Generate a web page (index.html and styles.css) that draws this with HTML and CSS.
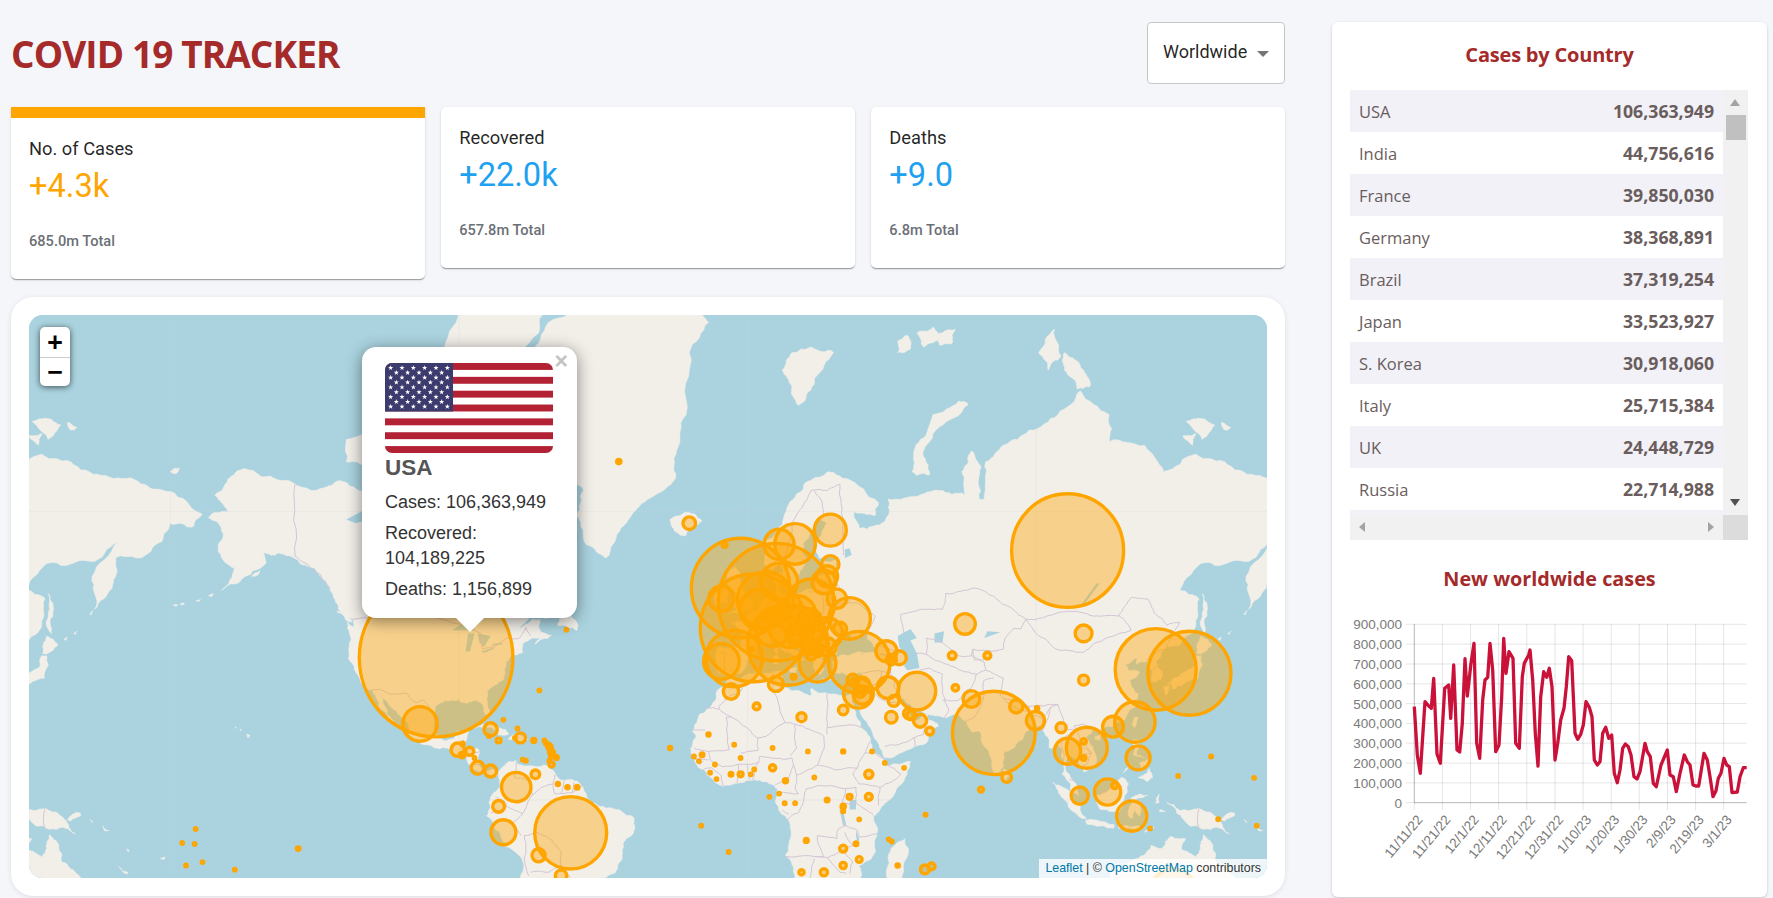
FILE: index.html
```html
<!DOCTYPE html>
<html lang="en">
<head>
<meta charset="utf-8">
<title>COVID 19 Tracker</title>
<link rel="stylesheet" href="styles.css">
</head>
<body>
<div class="app">
  <main class="left">
    <header class="header">
      <h1 class="brand">COVID 19 TRACKER</h1>
      <div class="select"><span>Worldwide</span><i class="caret"></i></div>
    </header>
    <section class="stats">
      <article class="stat stat-active">
        <div class="stat-bar"></div>
        <div class="stat-body">
          <div class="stat-label">No. of Cases</div>
          <div class="stat-value orange">+4.3k</div>
          <div class="stat-total">685.0m Total</div>
        </div>
      </article>
      <article class="stat">
        <div class="stat-body">
          <div class="stat-label">Recovered</div>
          <div class="stat-value blue">+22.0k</div>
          <div class="stat-total">657.8m Total</div>
        </div>
      </article>
      <article class="stat">
        <div class="stat-body">
          <div class="stat-label">Deaths</div>
          <div class="stat-value blue">+9.0</div>
          <div class="stat-total">6.8m Total</div>
        </div>
      </article>
    </section>
    <section class="map-card">
      <div class="map">
        <svg id="world" class="world" viewBox="29 315 1238 563" preserveAspectRatio="none" aria-hidden="true"></svg>
        <div class="zoom">
          <span class="zoom-btn">+</span>
          <span class="zoom-btn">&#8722;</span>
        </div>
        <div class="popup">
          <span class="popup-close">&#215;</span>
          <svg id="flag" class="flag" viewBox="0 0 168 90" aria-hidden="true"></svg>
          <div class="popup-name">USA</div>
          <div class="popup-line">Cases: 106,363,949</div>
          <div class="popup-line">Recovered: 104,189,225</div>
          <div class="popup-line">Deaths: 1,156,899</div>
          <i class="popup-tip"></i>
        </div>
        <div class="attrib"><a>Leaflet</a> | © <a>OpenStreetMap</a> contributors</div>
      </div>
    </section>
  </main>
  <aside class="panel">
    <h3 class="panel-title">Cases by Country</h3>
    <div class="table-box">
      <div class="rows">
        <div class="row"><span>USA</span><b>106,363,949</b></div>
        <div class="row"><span>India</span><b>44,756,616</b></div>
        <div class="row"><span>France</span><b>39,850,030</b></div>
        <div class="row"><span>Germany</span><b>38,368,891</b></div>
        <div class="row"><span>Brazil</span><b>37,319,254</b></div>
        <div class="row"><span>Japan</span><b>33,523,927</b></div>
        <div class="row"><span>S. Korea</span><b>30,918,060</b></div>
        <div class="row"><span>Italy</span><b>25,715,384</b></div>
        <div class="row"><span>UK</span><b>24,448,729</b></div>
        <div class="row"><span>Russia</span><b>22,714,988</b></div>
        <div class="row"></div>
      </div>
      <div class="vbar"><i class="arrow up"></i><i class="thumb"></i><i class="arrow down"></i></div>
      <div class="hbar"><i class="arrow left"></i><i class="arrow right"></i></div>
      <div class="corner"></div>
    </div>
    <h3 class="panel-title second">New worldwide cases</h3>
    <svg id="chart" class="chart" viewBox="1332 600 435 296" aria-hidden="true"></svg>
  </aside>
</div>
<script src="script.js"></script>
</body>
</html>
```
FILE: styles.css
```css
* { box-sizing: border-box; }
html, body { margin: 0; height: 100%; }
body { background: #f5f6fa; font-family: "Roboto", "Liberation Sans", sans-serif; overflow: hidden; }
.app { display: grid; grid-template-columns: 1274px 435px; column-gap: 47px; padding: 22px 6px 0 11px; }
.left { display: flex; flex-direction: column; }
.header { display: flex; justify-content: space-between; align-items: center; height: 62px; margin-bottom: 23px; }
.brand { margin: 0; font-family: "Open Sans", "Liberation Sans", sans-serif; font-weight: 700; font-size: 37px; letter-spacing: -.9px; color: #a52a2a; }
.select { width: 138px; height: 62px; background: #fff; border: 1px solid #c6c6c6; border-radius: 4px; padding: 0 15px 4px 15px; display: flex; align-items: center; justify-content: space-between; font-size: 18px; color: rgba(0,0,0,.87); }
.caret { width: 0; height: 0; border-left: 6px solid transparent; border-right: 6px solid transparent; border-top: 6px solid #757575; margin-top: 6px; }
.stats { display: flex; align-items: flex-start; gap: 16.5px; margin-bottom: 18px; }
.stat { flex: 1; background: #fff; border-radius: 5px; box-shadow: 0 2px 1px -1px rgba(0,0,0,.2), 0 1px 1px 0 rgba(0,0,0,.14), 0 1px 3px 0 rgba(0,0,0,.12); overflow: hidden; }
.stat-active { border-radius: 0 0 5px 5px; }
.stat-bar { height: 11px; background: #ffa500; }
.stat-body { height: 161px; padding: 19px 18px 0; display: flex; flex-direction: column; }
.stat-label { font-size: 18.3px; line-height: 24px; color: rgba(0,0,0,.87); }
.stat-value { font-size: 32.6px; line-height: 40px; margin-top: 5px; }
.orange { color: #ffa500; }
.blue { color: #1fa1f1; }
.stat-total { font-size: 14.6px; line-height: 20px; font-weight: 500; color: #6b6f76; margin-top: 25px; }
.map-card { background: #fff; border-radius: 22px; padding: 18px; height: 599px; box-shadow: 0 1px 5px rgba(0,0,0,.1); }
.map { position: relative; height: 563px; border-radius: 14px; overflow: hidden; background: #aad3df; }
.world { display: block; width: 100%; height: 100%; }
.zoom { position: absolute; left: 11px; top: 12px; width: 30px; background: #fff; border-radius: 5px; box-shadow: 0 1px 6px rgba(0,0,0,.65); display: flex; flex-direction: column; }
.zoom-btn { height: 29.5px; display: flex; align-items: center; justify-content: center; font: 700 25px "DejaVu Sans Mono", "Liberation Mono", monospace; color: #000; }
.zoom-btn + .zoom-btn { border-top: 1px solid #ccc; }
.popup { position: absolute; left: 333px; top: 32px; width: 215px; height: 271px; background: #fff; border-radius: 14px; box-shadow: 0 3px 16px rgba(0,0,0,.45); padding: 16px 23px 0; color: #333; font-family: "Liberation Sans", Arial, sans-serif; font-size: 18px; line-height: 25px; }
.popup-close { position: absolute; right: 9px; top: 1px; font: 700 23px "Liberation Sans", sans-serif; color: #c3c3c3; }
.flag { display: block; width: 168px; height: 90px; }
.popup-name { font-size: 22.5px; font-weight: 700; color: #555; line-height: 28px; margin-top: 1px; margin-bottom: 8px; }
.popup-line { margin-bottom: 6px; }
.popup-tip { position: absolute; left: 93px; bottom: -14px; width: 0; height: 0; border-left: 15px solid transparent; border-right: 15px solid transparent; border-top: 15px solid #fff; }
.attrib { position: absolute; right: 0; bottom: 0; height: 19px; padding: 0 6px; background: rgba(255,255,255,.8); font: 12.4px/19px "Liberation Sans", sans-serif; color: #333; }
.attrib a { color: #0078a8; }
.panel { background: #fff; border-radius: 6px; height: 875px; padding: 18px 0 0 18px; box-shadow: 0 1px 3px rgba(0,0,0,.2); display: flex; flex-direction: column; }
.panel-title { margin: 0; height: 30px; line-height: 30px; text-align: center; padding-right: 18px; font-family: "Open Sans", "Liberation Sans", sans-serif; font-weight: 700; font-size: 20px; letter-spacing: -.2px; color: #a52a2a; }
.panel-title.second { margin-top: 23px; height: 32px; line-height: 32px; font-size: 19.8px; letter-spacing: 0; }
.table-box { margin-top: 20px; width: 398px; height: 450px; display: grid; grid-template-columns: 373px 25px; grid-template-rows: 425px 25px; }
.rows { overflow: hidden; }
.row { height: 42px; display: flex; justify-content: space-between; align-items: center; padding: 0 9px; font-family: "Open Sans", "Liberation Sans", sans-serif; font-size: 16.5px; color: #6a5d5d; }
.row:nth-child(odd) { background: #f1f1f7; }
.row b { font-weight: 700; font-size: 17.7px; }
.vbar, .hbar { background: #f1f1f1; position: relative; }
.corner { background: #dcdcdc; }
.thumb { position: absolute; left: 3px; top: 25px; width: 20px; height: 25px; background: #c0c0c0; }
.arrow { position: absolute; width: 0; height: 0; }
.arrow.up { left: 7px; top: 9px; border: 5.5px solid transparent; border-top: 0; border-bottom: 7px solid #a3a3a3; }
.arrow.down { left: 7px; bottom: 9px; border: 5.5px solid transparent; border-bottom: 0; border-top: 7px solid #505050; }
.arrow.left { left: 9px; top: 7px; border: 5.5px solid transparent; border-left: 0; border-right: 6px solid #a3a3a3; }
.arrow.right { right: 9px; top: 7px; border: 5.5px solid transparent; border-right: 0; border-left: 6px solid #a3a3a3; }
.chart { display: block; width: 435px; height: 296px; margin: 5px 0 0 -18px; flex: none; }
```
FILE: script.js
```js
var NS = 'http://www.w3.org/2000/svg';
function el(parent, name, attrs, text) {
  var n = document.createElementNS(NS, name);
  for (var k in attrs) n.setAttribute(k, attrs[k]);
  if (text !== undefined) n.textContent = text;
  parent.appendChild(n);
  return n;
}
var D = Math.PI / 180, KX = 3.2056, KY = 183.66, X0 = 747, Y0 = 800, WORLD = 1154;
function px(lon) { return X0 + lon * KX; }
function py(lat) { return Y0 - KY * Math.log(Math.tan(Math.PI / 4 + lat * D / 2)); }
function invY(y) { return (2 * Math.atan(Math.exp((Y0 - y) / KY)) - Math.PI / 2) / D; }

var LAND = [
/* North America */
[-168,65.7,-164,66.5,-161.5,66.3,-163,67.1,-166,68.4,-162,70.2,-156.5,71.3,-150,70.5,-141,69.7,-135,69,-128,70,-124,69.5,-115,68.5,-108,68,-101,68,-96,68.3,-94,71.8,-92,70,-88,68.5,-85,69.5,-82,68.5,-81.5,67,-86,66.5,-88,64,-93,62,-94.5,59,-92.5,57,-88,56.5,-85,55.3,-82.5,55,-82,52.9,-80,51.3,-79,52,-79,54.5,-77,56,-78,58.5,-78,62.4,-73,62.3,-70,61,-69,58.9,-66,58.8,-64.5,60.3,-61.5,56.5,-57,53,-56,52,-60,50.2,-66,50.2,-69,48.5,-71,46.9,-67,49,-64.5,49,-65,47.5,-64,46.3,-61,45.6,-66,43.6,-64.5,45.3,-67,45,-70,43.7,-70,41.7,-74,40.6,-75.5,38,-76,35,-78,33.9,-81,32,-81.3,30,-80,26.5,-80.5,25.2,-81.8,26,-83,29,-85,29.7,-89,29.1,-90,30,-94,29.6,-97.3,27.5,-97.7,22.5,-96,19,-94.5,18.2,-91.5,18.7,-90.5,21,-87,21.5,-87.7,18,-88.7,15.9,-84,15.9,-83.3,14.9,-83.7,11,-82,9,-79.5,9.5,-77.5,8.7,-78,7.5,-80,7.3,-80.5,8.2,-83,8.2,-85.7,10,-87.5,13,-91.5,14,-94.5,16.2,-100,17,-105.5,20,-105.5,22.5,-109,26,-112.5,29.5,-114.7,31.7,-113,28,-110,23.5,-112,25,-115,28,-117,32.5,-120.5,34.5,-122.5,37.7,-124.3,40.3,-124,46,-124.7,48.4,-122.5,47.5,-123,49.2,-127.5,51,-130,54.5,-133,57,-137,58.7,-140,59.7,-146,60.8,-151,60.8,-150,59.3,-154,58,-158,56.2,-164,54.6,-160,58.5,-162,59,-165,61,-164,64.4],
/* Arctic Canada */
[-90,76.5,-78,76.3,-75,78.5,-65,81,-63,82.3,-75,83,-90,82,-95,80,-88,78],
[-96,76,-80,75.5,-80,74.7,-92,74.5],
[-80,73.7,-72,71.5,-68,70,-62,67,-64,63,-70,62.5,-75,64.5,-78,64.5,-73,67.5,-78,70,-88,70.5,-89,73.5],
[-117,69,-105,68.7,-102,70,-105,73,-117,73],
[-125,72,-118,71.5,-116,73.5,-120,74.5,-125,74],
[-117,75.5,-105,75,-106,76.5,-115,76.5],
[-87,63.5,-80,63.5,-83,65.5],
[-101,72,-96,72,-96,74,-101,74],
[-59,47.7,-53,46.7,-52.7,47.7,-55.5,51.5,-57,51],
[-128,50.6,-125,50,-123.4,48.4,-125,48.8],
[-154.5,57,-152,58,-152.5,57.3],
[-64,49.8,-62,49.3,-63,49.2],
/* Aleutians */
[-168,53.6,-166.5,54,-167,53.4],[-172,52.6,-170.5,52.9,-171,52.5],[-176.8,52,-175.5,52.2,-176,51.8],[-179,51.9,-177.6,51.9,-178,51.6],
/* Greenland */
[-73,78.2,-68,76,-60,75.5,-55,70,-51,69,-53,66,-50,62,-44,60,-42,62,-37,65.5,-31,68,-23,70,-22,73,-19,76,-18,80,-12,81.5,-30,83.5,-50,82.5,-62,81.5,-68,80],
/* Caribbean */
[-85,21.8,-80,23.1,-74.2,20.2,-77.5,19.9,-78,20.7,-82,22.3],
[-74.4,18.5,-73,19.9,-69.8,19.5,-68.4,18.6,-71.5,17.7],
[-78.3,18.4,-76.3,18.1,-77,17.8],
[-67.2,18.5,-65.7,18.4,-66,18,-67.2,18],
/* Hawaii */
[-156,20.2,-155,19.7,-155.7,19],[-158.2,21.6,-157.7,21.4,-158,21.2],[-159.7,22.2,-159.3,22,-159.6,21.9],
/* South America */
[-77.5,8.7,-75.5,10.7,-72,12.2,-71.5,11,-68,10.6,-62,10.7,-60,8.5,-57,6,-52,5,-50,1,-48,-1,-44,-2.5,-40,-3,-35.3,-5.5,-35,-9,-38.5,-13,-39,-18,-41,-22,-45,-23.7,-48,-26,-48.7,-28.5,-52,-32.5,-57,-34.5,-58,-38,-62,-39,-65,-42,-68,-50,-68,-54,-72,-53,-75,-47,-73,-40,-71,-30,-70,-18.5,-76,-14,-79,-7.5,-81.2,-5,-80,-2.5,-80,1,-78.5,2.5,-77,4,-77.5,7],
/* Africa */
[-6,35.8,-2,35.2,3,36.9,10,37.3,11,36.9,10,34,15,32.3,20,31,20,32.8,25,31.6,29,31,32.3,31.2,34.2,31.3,32.5,29.9,35,24,37,21,39,16,43,12,44,10.5,51,11.9,49,6,43,-1,39.5,-5,40.5,-11,40,-16,35,-20,35.5,-24,33,-26,31,-30,27,-34,20,-35,18,-33,15,-27,14.5,-22,12,-17,13.8,-11,12,-5,9,-1,9.5,3.5,8.5,4.5,5,5.7,1,6,-4,5.2,-8,4.5,-11,6.8,-13.5,9.5,-16.5,12.5,-17.5,14.7,-16,19,-17,21,-14.5,26,-10,29.5,-9.5,32,-6.5,34],
[49.3,-12,50.4,-15.5,47.5,-25,45,-25.5,43.5,-22,44.3,-16.5],
/* Eurasia */
[-9,37,-9.5,38.8,-8.8,43,-2,43.4,-1.2,46,-4.7,48.4,-1.5,48.7,1.5,50.5,4,52,6,53.4,8.7,53.9,8.2,57,10.6,57.7,10.5,55.5,9.8,54.8,11,54,14,54,18.5,54.7,21,55,21,57,24,57.2,24,59.4,28,59.6,30,60,25,60.2,22.5,60,21.3,62.5,25,65,22,65.8,17.5,62.2,17.5,60.5,19,59.8,16.5,58,16,56.2,14.2,55.4,13,55.4,11,58.5,10.5,59.3,8,58,5.5,59,5,62,11,64.8,14.5,68,19,70,25.5,71,31,70.3,41,67.6,40,66,33,66.7,35,64.3,40,64.7,44,66,44,68,46,68,54,68.5,60,69,68,68.5,67,71,70,73,73,71.5,72.5,68,74,68,74.5,72,80,73.5,88,74.8,97,76,104,77.7,113,76,113,73.8,124,73.5,130,71,140,72.7,150,71.7,160,70.6,170,70,178,69,180,68.9,190,66.2,187,64.5,180,65,177.5,62.5,170,60,163,60,163,57,162,55,156.5,51,155.7,57,163.5,62.4,155,59.5,143,59.3,135,54.7,141,53,140,48,135,43.5,130,42.5,127.5,39.7,129.5,37,129,35.2,126.3,34.5,126.7,37.5,125,38,125,39.7,121.5,39,122,40.7,118,39,119,37.3,122.5,37,119.3,35,122,31.5,121.5,28.5,118,24.5,114,22.3,110,21,108,21.6,105.8,19,109,13,109,11.5,105,8.7,105,10,100.5,13.5,99.2,10,103.5,1.4,101,3,98.3,8,98.5,15,97,17,94.3,16,94,19,91.5,22.5,89,21.8,86.8,20.5,80.2,15,80,10.3,77.5,8,73,19,72.5,21,70,20.8,68.5,23.5,66.5,25.3,61,25,57,25.7,54.7,26.5,51,28.5,48.7,30.3,48,29.5,50,26.5,51.5,25,51,24.3,53,24,56.3,26,56.5,24.2,59.8,22.5,55,17,45,13,43,13,39,21,35,28,34.9,29.5,32.6,30,34.2,31.3,35.5,33.9,36,36.7,32,36,27.5,36.8,26.5,39.5,29,41,35,42,41.5,41.5,39,44,37.5,45,38,47,35,45.3,33,45,31,46.5,28.5,44,28,41.5,26,40.8,23,40.5,24,38,23,36.5,21.5,37,19.5,41,19,42.5,13.6,45.6,12.3,45.2,12.5,44,16,41.9,18.3,40,16.6,39.8,16,38,15.7,40,12.3,41.8,10,43.5,8.8,44.4,6,43.1,3,43.2,3.2,41.9,0,39.8,-0.5,38,-2,36.8,-5.4,36],
/* European islands */
[-5.5,50,1.5,51.2,1.7,52.7,0,53,-1.5,55,-2,57.5,-4,58.6,-6,57.5,-5,55,-3,54,-4.5,53,-5,51.7,-3,51.4],
[-10,52,-6.2,52.2,-6,54,-6.8,55.2,-10,54],
[-24,65.5,-18,66.4,-14,65.3,-19,63.4,-22.5,63.9],
[11,79,14,80,20,80.3,27,80,21,78.5,18,77,16,76.7,14,78],
[51.5,71,53,70.6,57,70.7,55,72.5,58,74.5,67,76.2,69,76.8,66,77,58,76,54,74,52,72.5],
[47,80.6,50,80.9,51,80.2,47,80],[53,81,58,81.3,60,80.6,55,80.3],[60,81,65,81.2,64,80.5,60,80.4],
[91,80,96,81.2,98,79.8,94,79],[99,80,105,79,107,78,103,77.8,99,79],
[137,75.5,142,75.7,146,75.2,142,74],[148,75.4,151,75,149,74.8],[136,74.3,140,74.5,139,73.5],
[-180,71,-177,71.4,-178,70.8],
[8.3,41,9.7,41,9.6,39,8.4,39],[8.6,43,9.5,42.9,9.3,41.4,8.6,42],[12.5,38,15.6,38.2,15.1,36.7],[23.5,35.5,26.2,35.2,24,35],[32.3,35,34.5,35.6,33.7,34.8],[10,55.5,12.5,56,12.3,55],
/* East Asia islands */
[142,54,143.5,50,143,46,142,47,142,50],
[155,50,156,50.8,155.5,50],[150,46,151,46.5,150.5,45.8],[147,44.8,148,45.2,147.5,44.5],
[130.9,34,133,35.5,136.5,37,139.5,38.5,140,41,141.5,41,142,39,140.8,35.5,137,34.6,135.5,33.5,132.5,34.2],
[140.3,41.5,141.5,45.4,145,43.5,143,42],
[130,33.3,131.8,33.6,131,31.2,130.2,31.4],
[132.5,34,134.5,34.2,134,33,132.7,32.8],
[121,25,122,25,120.8,22,120,23],
[108.7,19.5,110.5,20,110,18.3,108.7,18.6],
[80,9.7,82,7.5,80.5,6,79.8,7.5],
[95.3,5.6,98,4.2,104,-2,106,-6,104.5,-5.8,101,-3,98,1],
[105.5,-6.5,110,-6.6,114.5,-7.6,114.5,-8.7,106,-7.5],
[109,1.5,111,2,113,3.2,116.7,7,119,5,117.7,1,116.3,-3.8,114,-3.6,110,-2.8,109,0],
[119.5,-5.5,119,-3,120,0.8,125,1.5,121,0,123,-1,122.5,-5,120.8,-3,120.4,-5.6],
[120.5,18.5,122.2,18.4,121.5,14,124,13,120.5,14],[122,7,125.5,9.8,126.5,7,125,5.7],[122.5,11.5,125.5,12.5,125,10,123,10],
[117.2,8.4,119.5,11.3,119.4,10.5],
[131,-0.8,135,-3.3,141,-2.6,147,-6,150.5,-10.5,146,-8.5,143,-9,138,-8,134,-4],
[148,-6,152,-4,152,-5,149,-6.5],[155,-6,156,-7,155.5,-6.8],[159,-8,161,-9.5,160,-9.7],
[116,-8.3,123,-8.3,122,-8.9,116,-8.9],[124,-10,127,-8.5,125,-9.2],[127.5,-1,128.5,1.8,128.5,-0.8],[129,-3,130.5,-3.5,128.5,-3.5],
[113.5,-22,114,-26,115,-34,118,-35,124,-33,129,-31.6,135,-34.8,138,-35,140,-38,147,-39,150,-37,153,-31,153,-25,149,-21,146,-18.7,145.3,-15,142.5,-10.8,141.5,-15,140,-17.5,135.5,-15,136.8,-12,132.5,-11.3,129.5,-15,126,-14,122.5,-17.5,118,-20.3],
[177,-18,178.5,-17.5,178,-18.3],[166.5,-15,167.3,-15.5,167,-16],[164,-20.3,167,-22.3,166,-22.3]
];
var WATER = [
[47,45.5,51,47,53,45,51,44.5,53,41.5,53.8,38,50,37.5,49,38.5,50,40.5,47.5,43],
[58.5,46,61.5,46.5,61,44,58.5,44],
[103.7,51.6,105,51.8,110,55.8,109,55.8,105,52.5],
[-92,46.7,-88,48.5,-85,47,-85,46.6,-90,46.7],
[-87.8,42,-87,46,-85,46,-86.4,42],
[-84,46,-80,45.5,-82,43,-83.5,44],
[-83,42,-79,42.9,-79,42.6,-82,41.6],[-79.7,43.3,-76.3,43.6,-76.3,43.9,-79,43.8],
[-125,65.5,-118,67,-118,65.5,-122,65],[-117,61,-110,62.7,-110,62,-115,60.8],
[-99,50,-96,53.5,-97.5,53.5,-99,52],[30.5,60,32.7,60.5,32,61.5,30.5,61.3],[75,46.5,79,46.3,74,45],
[32,0,34,0,34,-3,32,-3],[29,-3.5,30,-3.5,31,-8,30,-8],[34,-9.5,35,-12,34.5,-14,34,-11],
[35,41,36.5,41.7,36,41.3]
];
var BORDERS = [
[-141,69.7,-141,60.3,-137,59,-130,55],[-123,49,-95,49,-89,48,-83,46,-82.5,42.5,-79,43,-75,45,-71,45,-69,47.3,-67.5,45.5],
[-117,32.5,-114.7,32.7,-111,31.3,-106.5,31.7,-103,29,-101,29.8,-97.3,25.9],[-92,14.7,-91,17.2,-89,17.8,-88.3,18.4],[-89.2,15.9,-89.2,17.8],[-90,13.7,-89,14.4,-87.5,13],[-89,14.4,-88.5,15.8],[-87.5,13,-85,14.5,-83.3,14.9],[-85.7,11,-83.7,11],[-83,8.2,-82.8,9.6],
[-72,12,-72.5,7,-67.5,6,-67,1.5],[-67,1.5,-70,-4.2],[-70,-4.2,-73.5,-7.5,-70.5,-11],[-69.5,-11,-65.5,-10,-60,-13.5,-58,-16,-58,-20],[-69.5,-11,-69,-16,-69.5,-18,-68,-23],[-78.5,1,-75.5,-0.5,-75,-2,-78,-3.5,-80,-4],[-60,8,-60.5,5,-64,4,-67,1.5],[-57,6,-58,2,-60,2,-60.5,5],[-54,5.5,-54.5,2.3,-58,2],[-51.5,4.3,-54.5,2.3],[-58,-20,-55,-24,-54.5,-26],[-70,-4.2,-75,-2],[-67.5,-22,-62,-22,-58,-20],
[-2,35,-1.5,32.5,-8.7,28,-8.7,27.3],[-8.7,27.3,-13,27.7],[-13,21.3,-17,21.3],[-8.7,27.3,-4.8,25,-6.5,25,-5.5,15.5,-12,15,-16.5,16],[-4.8,25,1.2,21,3.3,19,6,19.5,12,23.5],[12,23.5,9.5,30,8,33,8.2,37],[25,31.6,25,22,25,20],[12,23.5,15,23,24,19.5,24,15.7],[25,22,36.8,22],[15,23,15.5,16,13.6,13.7],[3.3,19,3.5,15.4,0.5,15,-2,14.5],[3.6,11.7,4,13.5,14,13],[8.7,4.5,13,7,14.5,11,14,13],[14.5,11,15.5,7.7,22,10.8,24,15.7],[22,10.8,27,9.5,33,10,34.5,10],[36.8,14.5,34.5,10,33,8,35,5,41.5,3.9,48,8,43,11],[36.8,14.5,38.5,18],[36.8,14.5,40,14.5,43,12.5],[41.5,3.9,41,-1.7],[39.5,-4.7,34,-1,30,-1],[34,-1,34,4,30.7,3.5,29.7,-1.4],[29.7,-1.4,29,-3,30.5,-8,28.5,-9,28,-12,22,-11,22,-13],[30.7,3.5,22,4.5,18.5,3.5,17.5,-1,16,-4,12.5,-6],[12,-17.3,24,-17.5,22,-13],[40.5,-10.5,35,-11.5,34.5,-9.5,30.5,-8],[22,-17.5,25,-17.7,30,-15.5,33,-14,30.5,-10],[30.2,-15.6,33,-19,32,-22.3],[20,-22,20,-28],[20,-22,21,-18],[25,-17.7,29,-22,31,-22.3],[-12,15,-11.5,12.4,-7.5,10.3,-5.5,10.5,-3,11,1,11,3.6,11.7],[-13.5,9.5,-11,10,-8,7.6,-7.5,4.5],[-3,5,-2.7,11],[1,6,0,11],[1.7,6.2,3.6,11.7],[13,2.2,9.8,2.3],[13,2.2,16,2,15,3.5,15.5,7.7],[13,-4.5,11,-3],[-16.7,12.4,-13.7,12.7,-12,12.4],[-15,10.8,-13.7,12],
[36,36.7,42,37.2,44.8,37,44.5,39.8,43.5,41.2,41.5,41.5],[42,37.2,41,34.5,38.8,33.4,36,32.4],[38.8,33.4,39,32,44,29,46.5,29,48,29.5],[44.8,37,46,35,46,33,48,30.5],[53.8,37.5,57,38,61,36.5],[61,36.5,60.8,34,61,31.5,63,27,61.5,25],[61,29.7,66,29.7,70,33,71.5,36.5,74.5,37.5],[68,23.7,71,25,74,31,74,35,77,35.5],[43,16.5,47,17,52,19,55,20,55.5,22,52,23,51.5,24.5],[52.5,16.5,52,19],[35,29.5,36,32.4],[36,32.4,35.5,33.1],
[49,46,48,50,55,51,61,51,62,54,71,55,77,53.5,83,51,87,49],[53,41.5,56,41.3,56,45,61,44,66,41,70,41,70.5,42.5,80,42.5,80.5,45,83,47,85.5,47,87,49],[56,41.3,62,39,66.5,37.5,71.5,36.5],[70,41,74,39.5,74.5,37.5],[70.5,42.5,71,40,74,40],[87,49,98,50.5,107,49.8,116,49.7,119.8,46.7,112,45,105,41.8,96,42.7,91,45.5,87,49],[116,49.7,120,53.3,125,53,127.5,50,131,47.8,135,48.4,131,43,130.5,42.5],[74.5,37.5,80,35.5,79,31,81,30,88,28,97,28.5],[80,30,84,27.5,88,26.5,88,28],[97,28.5,98.5,25,100,21.5,102,21.5],[102,22.5,105,23,108,21.6],[100,20,98,17,99,11],[100,20,102,18,105,16,107.5,14.5,104,18.5,102,22.5],[102.5,12,105,14.3,107.5,14.5,106,11,104.5,10.5],[124.5,40,128,42,130.5,42.5],[126.6,37.8,128.5,38.6],[40,41.5,43.5,41.2,46.5,41.8,48.5,41.8],[40,43.5,44,42.7,48.5,41.8],[88,26,92,25,92,21],[92,25,95,28,97,28.5],[92,21,93.5,24,95,28],[100.5,6.5,102,6],[109.5,1.5,114,4,115,4.8,117,4.2],[141,-2.6,141,-9],[125,-9,125,-9.8],
[-1.8,43.4,3.2,42.4],[-8.8,42,-6.5,41.5,-7,37.2],[2.5,51,6,49.5,8,49,7.6,47.6,7,46,7.5,43.8],[7,53.3,6,50.8,6,49.5],[14,54,15,51,12,50.3,13.8,48.8,13,47.5,9.5,47.5],[7,46,13.7,46.5,13.6,45.6],[23,54.3,24,50.8,22.5,49,19,49.5,15,51],[13.7,46.5,17,48,22.5,48,26.5,48.3,29,45.4],[19,42.5,22,42,23,41,26,41.8,28,42],[24,51.8,31,52.1,34,52.3,40,49.6,38,47],[28,59.5,28,56,32,53,31,52.1],[30,60.5,30,62,30,65,29,69.7],[11,59,12.5,61,14,65,20,69,25,69,29,69.7],[24,66,23,68,21,69],[21,56.3,26,56,28,56],[24,57.5,27,57.7],[23,54.3,26,54,28,56],[23,54.3,19,54.4],[15.5,46.5,17,45,19,45,19,42.5],[22,48,21,46,23,44,22.5,42],[23,44,28.5,43.8],[9,54.8,9.8,54.8],[26,41.5,26.3,40.8]
];

/* Seeded roughening so hand-listed vertices read as coastlines rather than straight facets. */
var seed = 12345;
function rnd() { seed = (seed * 1664525 + 1013904223) % 4294967296; return seed / 4294967296 - 0.5; }
function roughen(pts, closed, amp) {
  for (var pass = 0; pass < 3; pass++) {
    var out = [], n = pts.length, last = closed ? n : n - 1;
    for (var i = 0; i < last; i++) {
      var a = pts[i], b = pts[(i + 1) % n], dx = b[0] - a[0], dy = b[1] - a[1], len = Math.sqrt(dx * dx + dy * dy);
      out.push(a);
      if (len > 3) {
        var off = rnd() * Math.min(len * amp, 5);
        out.push([(a[0] + b[0]) / 2 - dy / len * off, (a[1] + b[1]) / 2 + dx / len * off]);
      }
    }
    if (!closed) out.push(pts[n - 1]);
    pts = out;
  }
  return pts;
}
function toPx(arr) { var o = []; for (var i = 0; i < arr.length; i += 2) o.push([px(arr[i]), py(arr[i + 1])]); return o; }
function pathOf(pts, dx, closed) {
  var s = '';
  pts.forEach(function (p, i) { s += (i ? 'L' : 'M') + (p[0] + dx).toFixed(1) + ' ' + p[1].toFixed(1); });
  return s + (closed ? 'Z' : '');
}
var landPts = LAND.map(function (a) { return roughen(toPx(a), true, 0.32); });
var waterPts = WATER.map(function (a) { return toPx(a); });
var borderPts = BORDERS.map(function (a) { return roughen(toPx(a), false, 0.16); });

var world = document.getElementById('world');
var land = '', water = '', borders = '';
[-WORLD, 0].forEach(function (dx) {
  landPts.forEach(function (p) { land += pathOf(p, dx, true); });
  waterPts.forEach(function (p) { water += pathOf(p, dx, true); });
  borderPts.forEach(function (p) { borders += pathOf(p, dx, false); });
});
el(world, 'rect', { x: 0, y: 0, width: 1773, height: 898, fill: '#aad3df' });
el(world, 'path', { d: land, fill: '#f2efe9', stroke: '#f2efe9', 'stroke-width': 0.6, 'stroke-linejoin': 'round' });
el(world, 'path', { d: water, fill: '#aad3df' });
el(world, 'path', { d: borders, fill: 'none', stroke: '#d3c5d5', 'stroke-width': 1, 'stroke-linejoin': 'round' });
var grid = '';
[170.5, 459, 747.5, 1036].forEach(function (x) { grid += 'M' + x + ' 315V878'; });
[511.5, 800].forEach(function (y) { grid += 'M29 ' + y + 'H1267'; });
el(world, 'path', { d: grid, stroke: 'rgba(205,215,215,.22)', 'stroke-width': 1, fill: 'none' });

/* lat, lon, total cases in millions */
var CASES = [
[38,-97,106.36],[20,77,44.76],[46,2,39.85],[51,9,38.37],[-10,-55,37.32],[36,138,33.52],[37,127.5,30.92],[42.83,12.83,25.72],[54,-2,24.45],[60,100,22.71],[39,35,17.04],[40,-4,13.77],[16,106,11.53],[-27,133,11.4],[-34,-64,10.04],[23.5,121,10.2],[52.5,5.75,8.6],[23,-102,7.48],[32,53,7.56],[-5,120,6.73],[52,20,6.4],[4,-72,6.36],[39.5,-8,5.57],[49,32,5.5],[39,22,6.08],[47.33,13.33,5.96],[2.5,112.5,5.05],[15,100,4.73],[-30,-71,5.2],[31.5,34.75,4.8],[-10,-76,4.48],[60,-95,4.58],[50.83,4,4.7],[49.75,15.5,4.6],[47,8,4.4],[13,122,4.07],[-29,24,4.06],[46,25,3.38],[56,10,3.17],[22.25,114.17,2.76],[62,15,2.69],[33,44,2.47],[44,21,2.45],[1.37,103.8,2.2],[47,20,2.19],[24,90,2.04],[-41,174,2.2],[48.67,19.5,1.86],[42,43.5,1.8],[31,36,1.75],[53,-8,1.7],[30,70,1.58],[62,10,1.48],[64,26,1.46],[48,68,1.4],[56,24,1.3],[46,15,1.3],[43,25,1.3],[32,-5,1.27],[45.17,15.5,1.27],[15.5,-90.25,1.23],[33.83,35.83,1.23],[10,-84,1.2],[-17,-65,1.19],[34,9,1.15],[21.5,-80,1.11],[-2,-77.5,1.05],[24,54,1.05],[9,-80,1.03],[-33,-56,1.03],[46,105,1.0],[28,84,1.0],[53,28,.99],[57,25,.97],[25,45,.83],[40.5,47.5,.83],[-23,-58,.81],[26,50.55,.71],[7,81,.67],[29.5,45.75,.66],[19,-70.67,.66],[32,35.25,.7],[35,33,.65],[22,98,.63],[47,29,.6],[59,26,.6],[8,-66,.55],[27,30,.52],[25.5,51.25,.5],[25,17,.5],[8,38,.5],[35,105,.5],[15,-86.5,.47],[-21.15,55.5,.49],[40,45,.45],[44,18,.4],[21,57,.4],[49.75,6.17,.32],[41.83,22,.35],[-15,30,.34],[1,38,.34],[41,20,.33],[-22,24,.33],[-20.28,57.55,.3],[42.67,21.17,.27],[28,3,.27],[10,8,.27],[-20,30,.26],[41,64,.25],[-18.25,35,.23],[42.5,19.3,.29],[41,75,.2],[33,65,.21],[65,-18,.21],[1,32,.17],[13.83,-88.92,.2],[8,-2,.17],[-22,17,.17],[11,-61,.19],[14.67,-61,.23],[13,105,.14],[-2,30,.13],[18.25,-77.5,.15],[6,12,.12],[3.25,73,.19],[-12.5,18.5,.1],[0,25,.1],[14,-14,.09],[-13.5,34,.09],[8,-5,.09],[4,-56,.08],[5,-59,.07],[18,105,.2],[4.5,114.67,.27],[-18,175,.07],[-15,-140,.08],[-21.5,165.5,.08],[13.47,144.78,.05],
[20,-12,.063],[17,-4,.033],[13,-2,.022],[16,8,.0095],[15,19,.0076],[15,30,.063],[10,49,.027],[11.5,43,.016],[15,39,.01],[-1,11.75,.049],[-1,15,.025],[7,21,.015],[2,10,.017],[1,7,.0066],[9.5,2.25,.028],[8,1.17,.039],[8.5,-11.5,.0078],[6.5,-9.5,.008],[11,-10,.038],[12,-15,.009],[13.47,-16.57,.012],[16,-24,.063],[-6,35,.043],[-3.5,30,.052],[-12.17,44.25,.009],[-4.58,55.67,.05],[-20,47,.068],[-12.83,45.17,.04],[-8,-14.3,.0002],[-16,-5.7,.0008],[24.25,-76,.038],[21.75,-71.58,.0065],[19.5,-80.5,.031],[19,-72.4,.034],[18.25,-66.5,.11],[17.05,-61.8,.009],[16.25,-61.58,.2],[13.88,-61,.03],[13.17,-59.5,.1],[12.1,-61.67,.019],[13.25,-61.2,.009],[12.5,-69.97,.044],[12.17,-69,.046],[18.25,-63.17,.004],[17.3,-62.7,.006],[15.4,-61.3,.016],[17.25,-88.75,.07],[13,-85,.015],[4,-53,.095],[32.33,-64.75,.018],[46.83,-56.33,.0034],[72,-40,.012],[35.83,14.58,.117],[42.5,1.6,.048],[62,-7,.034],[7.5,134.5,.0057],[6.9,158.2,.026],[-6,147,.046],[-8,159,.025],[-8.83,125.75,.023],[27.5,90.5,.062],[-13.3,-176.2,.003],[-13.58,-172.33,.016],[-9,-172,.0005],[-20,-175,.016],[-19,-169.87,.0007],[-21.23,-159.77,.007],[17.6,-62.8,.003]
];
var G = 0.00181, shapes = el(world, 'g', { fill: '#ffa500', 'fill-opacity': 0.4, stroke: '#ffa500', 'stroke-width': 3.4 });
CASES.forEach(function (c) {
  var lat = c[0], m = G * Math.sqrt(c[2] * 1e6);
  var top = py(lat + m), bot = py(lat - m), cy = (top + bot) / 2, lat2 = invY(cy);
  var cosv = (Math.cos(m * D) - Math.sin(lat * D) * Math.sin(lat2 * D)) / (Math.cos(lat * D) * Math.cos(lat2 * D));
  var rx = Math.acos(Math.min(1, cosv)) / D * KX;
  el(shapes, 'ellipse', { cx: px(c[1]).toFixed(1), cy: cy.toFixed(1), rx: Math.max(rx, 1.2).toFixed(1), ry: Math.max(cy - top, 1.2).toFixed(1) });
});

/* flag */
var flag = document.getElementById('flag');
var clip = el(el(flag, 'defs', {}), 'clipPath', { id: 'flag-clip' });
el(clip, 'rect', { width: 168, height: 90, rx: 7 });
var fg = el(flag, 'g', { 'clip-path': 'url(#flag-clip)' });
el(fg, 'rect', { width: 168, height: 90, fill: '#fff' });
for (var s = 0; s < 13; s += 2) el(fg, 'rect', { y: (s * 90 / 13).toFixed(2), width: 168, height: (90 / 13).toFixed(2), fill: '#b22234' });
el(fg, 'rect', { width: 68, height: 48.5, fill: '#3c3b6e' });
function star(cx, cy, r) {
  var p = [];
  for (var i = 0; i < 10; i++) {
    var a = -Math.PI / 2 + i * Math.PI / 5, q = i % 2 ? r * 0.4 : r;
    p.push((cx + q * Math.cos(a)).toFixed(2) + ',' + (cy + q * Math.sin(a)).toFixed(2));
  }
  return p.join(' ');
}
for (var j = 1; j <= 9; j++) for (var i = 1; i <= 11; i++) if ((i + j) % 2 === 0) el(fg, 'polygon', { points: star(i * 68 / 12, j * 48.5 / 10, 2.7), fill: '#fff' });

/* chart */
var chart = document.getElementById('chart');
var PL = 1414.3, PR = 1746.7, P0 = 802.7, STEP = 19.82;
var gr = '';
for (var g = 0; g <= 9; g++) gr += 'M1406 ' + (P0 - g * STEP).toFixed(1) + 'H' + PR;
var labels = ['11/11/22','11/21/22','12/1/22','12/11/22','12/21/22','12/31/22','1/10/23','1/20/23','1/30/23','2/9/23','2/19/23','3/1/23'];
labels.forEach(function (t, n) {
  var x = PL + n * 28.13;
  gr += 'M' + x.toFixed(1) + ' 624V810';
});
el(chart, 'path', { d: gr, stroke: 'rgba(0,0,0,.1)', 'stroke-width': 1, fill: 'none' });
el(chart, 'path', { d: 'M' + PL + ' 624V' + P0 + 'M1414 ' + P0 + 'H' + PR, stroke: 'rgba(0,0,0,.2)', 'stroke-width': 1, fill: 'none' });
var tickFont = { fill: '#7a7a7a', 'font-family': '"Liberation Sans", Arial, sans-serif', 'font-size': 13.5 };
function textAttrs(extra) { var o = {}; for (var k in tickFont) o[k] = tickFont[k]; for (var e in extra) o[e] = extra[e]; return o; }
for (var h = 0; h <= 9; h++) {
  var lab = h === 0 ? '0' : h + '00,000';
  el(chart, 'text', textAttrs({ x: 1402, y: (P0 - h * STEP + 5).toFixed(1), 'text-anchor': 'end' }), lab);
}
labels.forEach(function (t, n) {
  var x = PL + n * 28.13 + 9, y = 820;
  el(chart, 'text', textAttrs({ x: x.toFixed(1), y: y, 'text-anchor': 'end', transform: 'rotate(-50 ' + x.toFixed(1) + ' ' + y + ')' }), t);
});
var TRACE = [253,320,262,465,271,520,285,305,296,318,304,325,311,235,321,462,331,490,344,265,356,255,362,355,371,195,381,450,389,456,397,370,405,176,412,288,423,190,432,130,440,430,449,475,458,300,465,240,473,232,480,130,488,210,497,455,507,435,515,290,521,115,528,220,537,155,549,175,557,430,568,445,577,230,583,190,596,165,600,150,608,240,616,400,624,498,632,290,641,215,650,232,658,205,666,260,675,480,683,430,692,360,702,325,709,260,716,170,725,182,735,400,743,418,752,403,760,375,768,305,778,322,786,350,793,480,802,495,810,485,818,400,827,382,836,415,845,405,853,520,862,548,870,510,878,445,886,432,895,440,903,465,912,530,921,537,930,515,945,430,952,455,961,470,970,550,979,560,993,495,1012,450,1020,525,1030,530,1039,575,1050,520,1063,465,1072,485,1080,495,1089,555,1097,558,1106,558,1122,460,1132,480,1140,530,1149,590,1158,572,1165,535,1173,520,1182,475,1190,495,1198,500,1206,578,1222,576,1230,530,1240,503,1250,503];
var line = '';
for (var t = 0; t < TRACE.length; t += 2) line += (t ? 'L' : 'M') + (1330 + TRACE[t] / 3).toFixed(1) + ' ' + (600 + TRACE[t + 1] / 3).toFixed(1);
el(chart, 'path', { d: line, fill: 'none', stroke: '#c9113a', 'stroke-width': 3.3, 'stroke-linejoin': 'round' });
```
